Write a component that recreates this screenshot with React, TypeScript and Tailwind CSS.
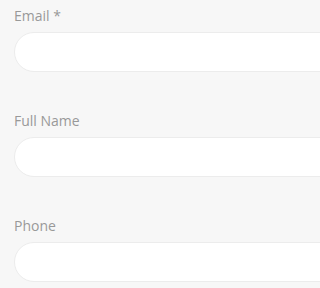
const fields = ['Email *', 'Full Name', 'Phone'];

export default function App() {
  return (
    <div
      className="w-full h-screen overflow-hidden bg-[#f7f7f7] pl-[14px] pt-[6px]"
      style={{ fontFamily: '"Open Sans", sans-serif' }}
    >
      {fields.map((label) => (
        <div key={label} className="mb-[39px]">
          <label className="block text-[14px] leading-5 text-[#999999] mb-[6px]">{label}</label>
          <input
            type="text"
            className="block w-[calc(100%+40px)] h-10 rounded-full bg-white border border-[#ececec] outline-none"
          />
        </div>
      ))}
    </div>
  );
}
